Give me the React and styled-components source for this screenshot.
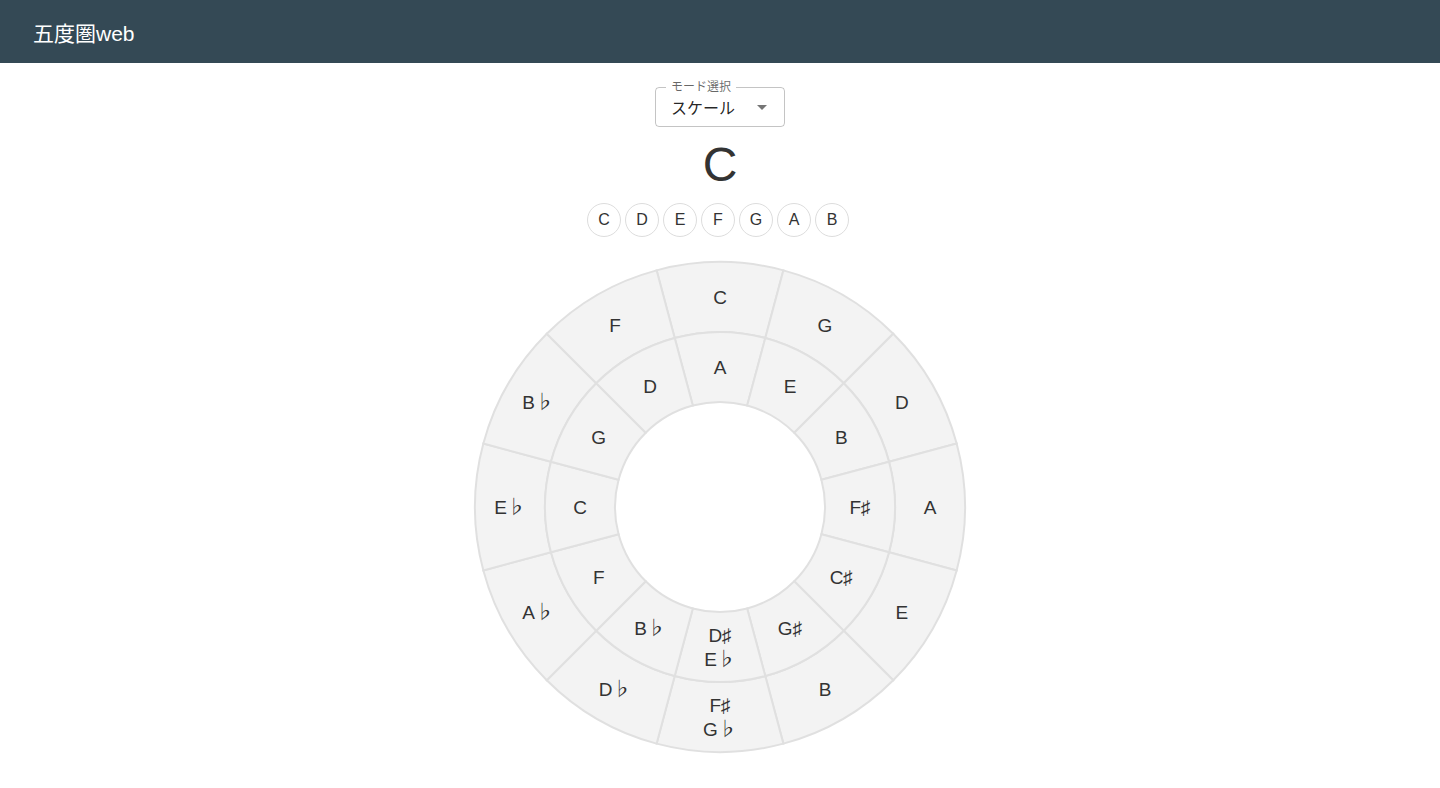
import React from "react";
import styled, { createGlobalStyle } from "styled-components";

const GlobalStyle = createGlobalStyle`
  body {
    margin: 0;
    background: #fff;
    font-family: "Liberation Sans", "Noto Sans CJK JP", sans-serif;
    color: #333;
  }
`;

const Header = styled.header`
  height: 63px;
  background: #344955;
  display: flex;
  align-items: center;
  padding-left: 33px;
`;

const Title = styled.h1`
  margin: 0;
  font-size: 21px;
  font-weight: 400;
  color: #fff;
  font-family: "Liberation Sans", "Noto Sans CJK JP", sans-serif;
`;

const Main = styled.main`
  display: flex;
  flex-direction: column;
  align-items: center;
  padding-top: 24px;
`;

const SelectBox = styled.div`
  position: relative;
  width: 130px;
  height: 40px;
  box-sizing: border-box;
  border: 1px solid rgba(0, 0, 0, 0.23);
  border-radius: 4px;
  display: flex;
  align-items: center;
  padding: 0 14px 0 15px;
  font-size: 16px;
  color: rgba(0, 0, 0, 0.87);
`;

const SelectLabel = styled.span`
  position: absolute;
  top: -8px;
  left: 10px;
  padding: 0 5px;
  background: #fff;
  font-size: 12px;
  line-height: 14px;
  color: rgba(0, 0, 0, 0.6);
`;

const SelectValue = styled.span`
  flex: 1;
`;

const Caret = styled.span`
  width: 0;
  height: 0;
  border-left: 5px solid transparent;
  border-right: 5px solid transparent;
  border-top: 5px solid rgba(0, 0, 0, 0.54);
  margin-right: 3px;
`;

const KeyName = styled.div`
  margin-top: 10px;
  font-size: 48px;
  line-height: 56px;
  color: #333;
`;

const NoteRow = styled.div`
  display: flex;
  gap: 4px;
  margin-top: 10px;
  margin-right: 4px;
`;

const Note = styled.div`
  width: 34px;
  height: 34px;
  box-sizing: border-box;
  border: 1px solid #ddd;
  border-radius: 50%;
  display: flex;
  align-items: center;
  justify-content: center;
  font-size: 16px;
  color: #333;
`;

const Wheel = styled.svg`
  margin-top: 20px;
  display: block;
`;

const outer = ["C", "G", "D", "A", "E", "B", ["F♯", "G♭"], "D♭", "A♭", "E♭", "B♭", "F"];
const inner = ["A", "E", "B", "F♯", "C♯", "G♯", ["D♯", "E♭"], "B♭", "F", "C", "G", "D"];

const C = 250;
const R_OUT = 245;
const R_MID = 175;
const R_IN = 105;

const pt = (deg, r) => {
  const a = (deg * Math.PI) / 180;
  return [C + r * Math.sin(a), C - r * Math.cos(a)];
};

const sector = (i, r1, r2) => {
  const s = i * 30 - 15;
  const e = i * 30 + 15;
  const [x1, y1] = pt(s, r2);
  const [x2, y2] = pt(e, r2);
  const [x3, y3] = pt(e, r1);
  const [x4, y4] = pt(s, r1);
  return `M${x1} ${y1} A${r2} ${r2} 0 0 1 ${x2} ${y2} L${x3} ${y3} A${r1} ${r1} 0 0 0 ${x4} ${y4} Z`;
};

const Label = ({ i, r, text }) => {
  const [x, y] = pt(i * 30, r);
  if (Array.isArray(text)) {
    return (
      <text x={x} y={y} textAnchor="middle" fontSize="19" fill="#333">
        <tspan x={x} dy="-5">{text[0]}</tspan>
        <tspan x={x} dy="24">{text[1]}</tspan>
      </text>
    );
  }
  return (
    <text x={x} y={y + 7} textAnchor="middle" fontSize="19" fill="#333">
      {text}
    </text>
  );
};

const scale = ["C", "D", "E", "F", "G", "A", "B"];

export default function App() {
  return (
    <>
      <GlobalStyle />
      <Header>
        <Title>五度圏web</Title>
      </Header>
      <Main>
        <SelectBox>
          <SelectLabel>モード選択</SelectLabel>
          <SelectValue>スケール</SelectValue>
          <Caret />
        </SelectBox>
        <KeyName>C</KeyName>
        <NoteRow>
          {scale.map((n) => (
            <Note key={n}>{n}</Note>
          ))}
        </NoteRow>
        <Wheel width="500" height="500" viewBox="0 0 500 500">
          <g fontFamily="'Liberation Sans', 'Noto Sans CJK JP', 'DejaVu Sans', sans-serif">
            {outer.map((t, i) => (
              <path key={"o" + i} d={sector(i, R_MID, R_OUT)} fill="#f3f3f3" stroke="#e0e0e0" strokeWidth="2" />
            ))}
            {inner.map((t, i) => (
              <path key={"i" + i} d={sector(i, R_IN, R_MID)} fill="#f3f3f3" stroke="#e0e0e0" strokeWidth="2" />
            ))}
            {outer.map((t, i) => (
              <Label key={"lo" + i} i={i} r={210} text={t} />
            ))}
            {inner.map((t, i) => (
              <Label key={"li" + i} i={i} r={140} text={t} />
            ))}
          </g>
        </Wheel>
      </Main>
    </>
  );
}
